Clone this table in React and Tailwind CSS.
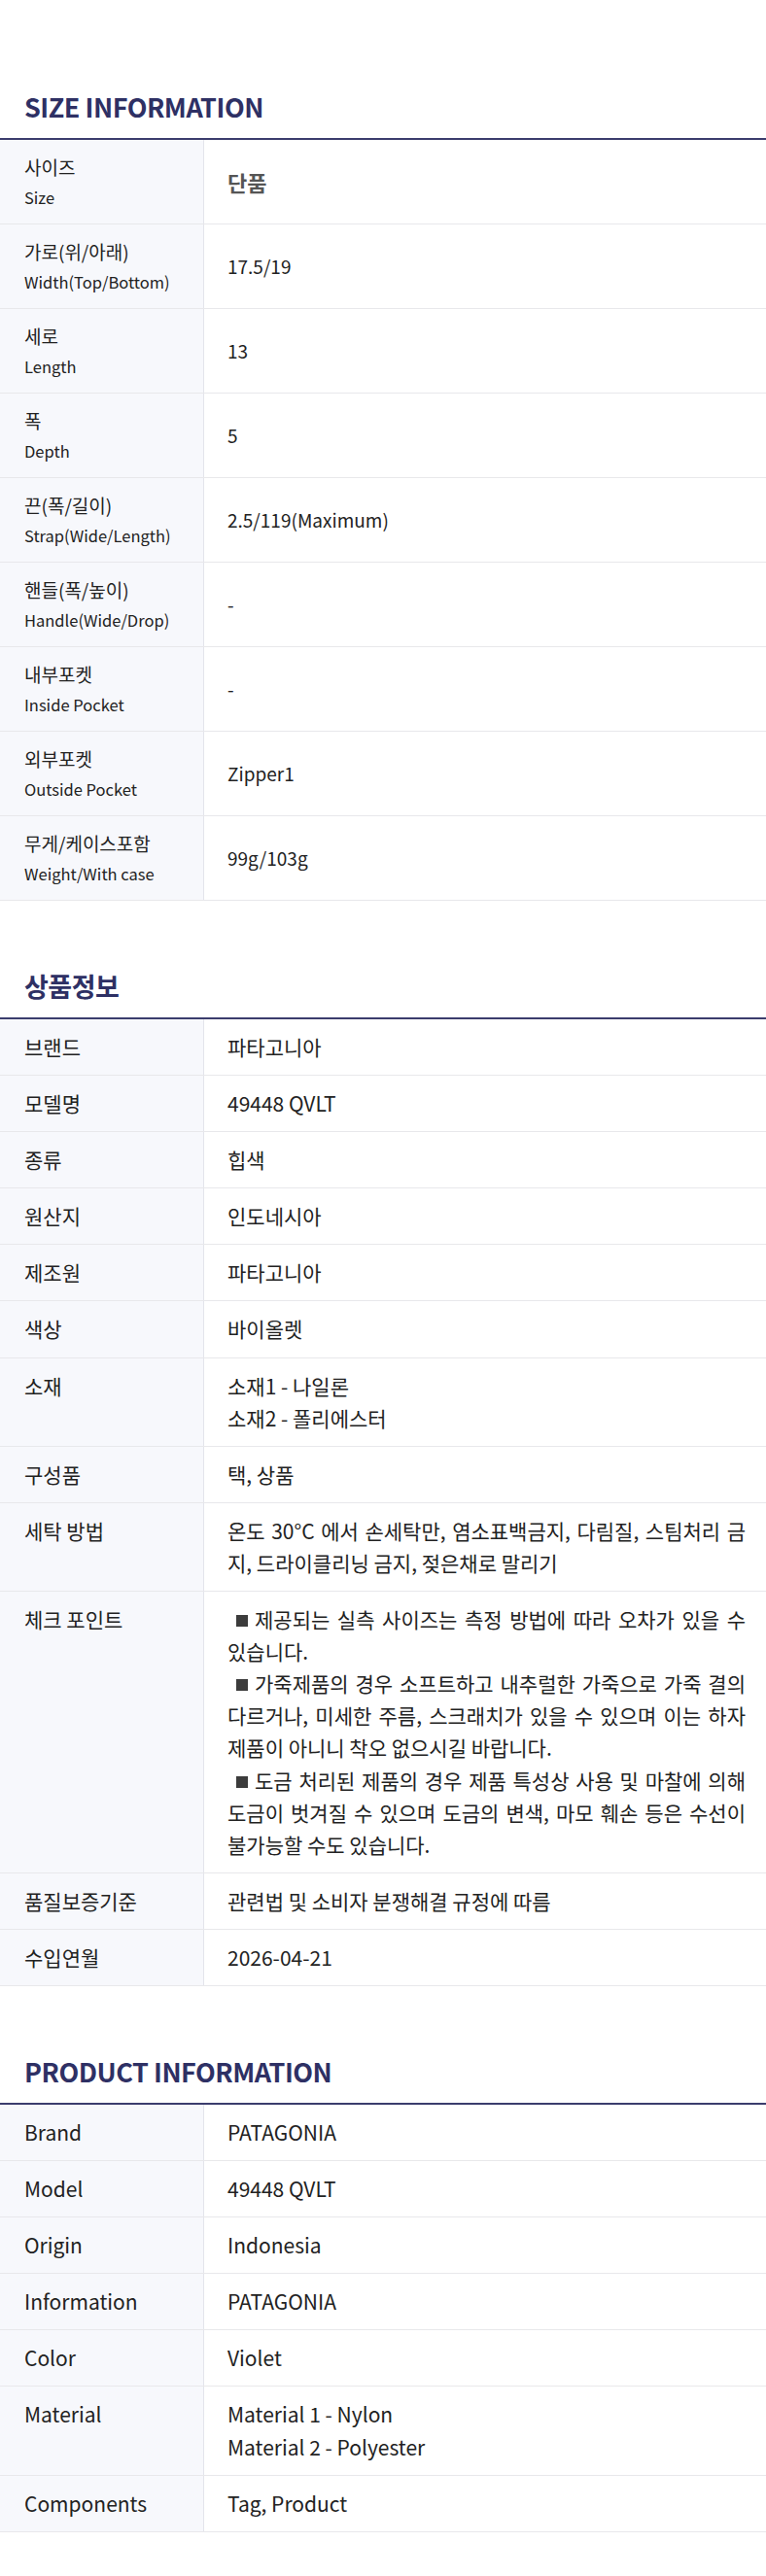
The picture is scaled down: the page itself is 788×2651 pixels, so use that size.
import React from "react";

const FONT = { fontFamily: '"Noto Sans CJK KR", "Noto Sans KR", sans-serif' };

const sizeRows = [
  ["사이즈", "Size", "단품", true],
  ["가로(위/아래)", "Width(Top/Bottom)", "17.5/19"],
  ["세로", "Length", "13"],
  ["폭", "Depth", "5"],
  ["끈(폭/길이)", "Strap(Wide/Length)", "2.5/119(Maximum)"],
  ["핸들(폭/높이)", "Handle(Wide/Drop)", "-"],
  ["내부포켓", "Inside Pocket", "-"],
  ["외부포켓", "Outside Pocket", "Zipper1"],
  ["무게/케이스포함", "Weight/With case", "99g/103g"],
];

// j: justified line, b: bullet line
const infoRows = [
  ["브랜드", [{ t: "파타고니아" }]],
  ["모델명", [{ t: "49448 QVLT" }]],
  ["종류", [{ t: "힙색" }]],
  ["원산지", [{ t: "인도네시아" }]],
  ["제조원", [{ t: "파타고니아" }]],
  ["색상", [{ t: "바이올렛" }]],
  ["소재", [{ t: "소재1 - 나일론" }, { t: "소재2 - 폴리에스터" }]],
  ["구성품", [{ t: "택, 상품" }]],
  [
    "세탁 방법",
    [
      { t: "온도 30°C 에서 손세탁만, 염소표백금지, 다림질, 스팀처리 금", j: true },
      { t: "지, 드라이클리닝 금지, 젖은채로 말리기" },
    ],
  ],
  [
    "체크 포인트",
    [
      { b: true, j: true, t: "제공되는 실측 사이즈는 측정 방법에 따라 오차가 있을 수" },
      { t: "있습니다." },
      { b: true, j: true, t: "가죽제품의 경우 소프트하고 내추럴한 가죽으로 가죽 결의" },
      { j: true, t: "다르거나, 미세한 주름, 스크래치가 있을 수 있으며 이는 하자" },
      { t: "제품이 아니니 착오 없으시길 바랍니다." },
      { b: true, j: true, t: "도금 처리된 제품의 경우 제품 특성상 사용 및 마찰에 의해" },
      { j: true, t: "도금이 벗겨질 수 있으며 도금의 변색, 마모 훼손 등은 수선이" },
      { t: "불가능할 수도 있습니다." },
    ],
  ],
  ["품질보증기준", [{ t: "관련법 및 소비자 분쟁해결 규정에 따름" }]],
  ["수입연월", [{ t: "2026-04-21" }]],
];

const productRows = [
  ["Brand", [{ t: "PATAGONIA" }]],
  ["Model", [{ t: "49448 QVLT" }]],
  ["Origin", [{ t: "Indonesia" }]],
  ["Information", [{ t: "PATAGONIA" }]],
  ["Color", [{ t: "Violet" }]],
  ["Material", [{ t: "Material 1 - Nylon" }, { t: "Material 2 - Polyester" }]],
  ["Components", [{ t: "Tag, Product" }]],
];

function Title({ children }) {
  return (
    <h2 className="px-[25px] text-[27px] tracking-[-0.5px] font-bold leading-[36px] mb-[14px] text-[#2e3064]">
      {children}
    </h2>
  );
}

function SizeTable() {
  return (
    <div className="border-t-2 border-[#3b3d6d]">
      {sizeRows.map(([ko, en, val, bold], i) => (
        <div key={i} className="flex border-b border-[#e8e8eb]">
          <div className="w-[210px] shrink-0 bg-[#f7f8fc] border-r border-[#e3e4eb] pl-[25px] pt-[13px] pb-[11px]">
            <div className="text-[19px] leading-[30px] text-[#222]">{ko}</div>
            <div className="text-[16.5px] leading-[32px] text-[#222]">{en}</div>
          </div>
          <div className="flex-1 flex items-center pl-[24px]">
            {bold ? (
              <span className="text-[22px] font-bold text-[#555]">{val}</span>
            ) : (
              <span className="text-[19px] text-[#222]">{val}</span>
            )}
          </div>
        </div>
      ))}
    </div>
  );
}

function InfoTable({ rows }) {
  return (
    <div className="border-t-2 border-[#3b3d6d]">
      {rows.map(([label, lines], i) => (
        <div key={i} className="flex border-b border-[#e8e8eb]">
          <div className="w-[210px] shrink-0 bg-[#f7f8fc] border-r border-[#e3e4eb] pl-[25px] py-[12px] text-[21px] leading-[33.1px] text-[#222]">
            {label}
          </div>
          <div className="flex-1 pl-[24px] pr-[21px] py-[12px] text-[21px] leading-[33.1px] text-[#222] whitespace-nowrap">
            {lines.map((l, j) => (
              <div
                key={j}
                className={
                  (l.j ? "text-justify [text-align-last:justify] " : "") + (l.b ? "pl-[9px]" : "")
                }
              >
                {l.b ? (
                  <span className="inline-block w-[12px] h-[12px] bg-[#3c3c3c] mr-[7px] align-[1px]"></span>
                ) : null}
                {l.t}
              </div>
            ))}
          </div>
        </div>
      ))}
    </div>
  );
}

export default function App() {
  return (
    <div className="w-[788px] bg-white pt-[92px] pb-[43px]" style={FONT}>
      <section>
        <Title>SIZE INFORMATION</Title>
        <SizeTable />
      </section>
      <section className="mt-[70px]">
        <Title>상품정보</Title>
        <InfoTable rows={infoRows} />
      </section>
      <section className="mt-[70px]">
        <Title>PRODUCT INFORMATION</Title>
        <InfoTable rows={productRows} />
      </section>
    </div>
  );
}
